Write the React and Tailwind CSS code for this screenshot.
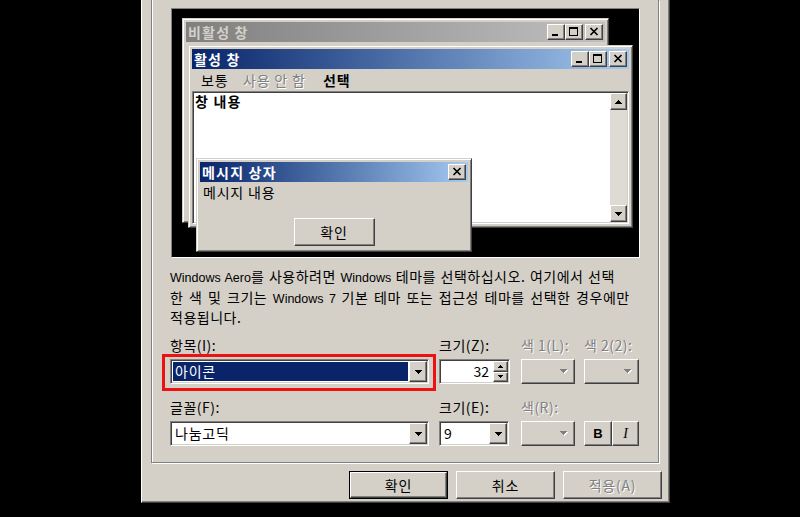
import React from 'react';

const raised = "bg-[#d4d0c8] border border-t-white border-l-white border-r-[#404040] border-b-[#404040] shadow-[inset_-1px_-1px_0_#808080]";
const sunken = "border border-t-[#808080] border-l-[#808080] border-r-white border-b-white shadow-[inset_1px_1px_0_#404040,inset_-1px_-1px_0_#d4d0c8]";
const frame = "bg-[#d4d0c8] border border-t-[#d4d0c8] border-l-[#d4d0c8] border-r-[#404040] border-b-[#404040] shadow-[inset_1px_1px_0_#fff,inset_-1px_-1px_0_#808080] p-[3px]";
const grayText = "text-[#808080] [text-shadow:1px_1px_0_#fff]";
const latin = "font-['Liberation_Sans',sans-serif] text-[12.5px] tracking-normal";

function ArrowDown({ gray = false }) {
  if (gray) {
    return (
      <svg width="8" height="5" viewBox="0 0 8 5" className="block">
        <path transform="translate(1 1)" d="M0 0h7v1h-1v1h-1v1h-1v1h-1v-1h-1v-1h-1v-1h-1z" fill="#fff" />
        <path d="M0 0h7v1h-1v1h-1v1h-1v1h-1v-1h-1v-1h-1v-1h-1z" fill="#808080" />
      </svg>
    );
  }
  return (
    <svg width="7" height="4" viewBox="0 0 7 4" className="block">
      <path d="M0 0h7v1h-1v1h-1v1h-1v1h-1v-1h-1v-1h-1v-1h-1z" fill="#000" />
    </svg>
  );
}

function ArrowUp() {
  return (
    <svg width="7" height="4" viewBox="0 0 7 4" className="block">
      <path d="M3 0h1v1h1v1h1v1h1v1h-7v-1h1v-1h1v-1h1z" fill="#000" />
    </svg>
  );
}

function SmallUp() {
  return (
    <svg width="5" height="3" viewBox="0 0 5 3" className="block">
      <path d="M2 0h1v1h1v1h1v1h-5v-1h1v-1h1z" fill="#000" />
    </svg>
  );
}

function SmallDown() {
  return (
    <svg width="5" height="3" viewBox="0 0 5 3" className="block">
      <path d="M0 0h5v1h-1v1h-1v1h-1v-1h-1v-1h-1z" fill="#000" />
    </svg>
  );
}

function CapBtn({ type }) {
  return (
    <div className={`${raised} w-[18px] h-[16px] flex items-center justify-center shrink-0`}>
      <svg width="14" height="12" viewBox="0 0 14 12" className="block">
        {type === 'min' && <rect x="3" y="8" width="6" height="2" fill="#000" />}
        {type === 'max' && <path d="M2 1h9v9h-9z M3 3h7v6h-7z" fillRule="evenodd" fill="#000" />}
        {type === 'close' && <path d="M3.5 2l7 7M10.5 2l-7 7" stroke="#000" strokeWidth="1.7" />}
      </svg>
    </div>
  );
}

function TitleBar({ active, title, close }) {
  const bg = active
    ? "bg-linear-to-r from-[#0a246a] to-[#a6caf0]"
    : "bg-linear-to-r from-[#808080] to-[#c0c0c0]";
  const tc = active ? "text-white" : "text-[#d4d0c8]";
  return (
    <div className={`${bg} h-[20px] shrink-0 flex items-center pl-[2px] pr-[2px]`}>
      <span className={`${tc} font-bold text-[14px] tracking-[1.2px] leading-[16px] flex-1 whitespace-nowrap`}>{title}</span>
      {!close && <CapBtn type="min" />}
      {!close && <CapBtn type="max" />}
      {!close && <div className="w-[2px]" />}
      <CapBtn type="close" />
    </div>
  );
}

function Preview() {
  return (
    <div className="ml-[19px] mt-[8px] w-[469px] h-[250px] shrink-0 bg-black border border-t-[#808080] border-l-[#808080] border-r-white border-b-white relative">
      {/* inactive window */}
      <div className={`${frame} absolute left-[10px] top-[9px] w-[427px] h-[205px] flex flex-col`}>
        <TitleBar active={false} title="비활성 창" />
      </div>
      {/* active window */}
      <div className={`${frame} absolute left-[16px] top-[36px] w-[445px] h-[183px] flex flex-col`}>
        <TitleBar active title="활성 창" />
        <div className="h-[22px] shrink-0 flex items-center pl-[9px] leading-[16px] whitespace-nowrap tracking-[0.8px]">
          <span className="w-[42px]">보통</span>
          <span className={`w-[80px] ${grayText}`}>사용 안 함</span>
          <span className="font-bold">선택</span>
        </div>
        <div className={`${sunken} bg-white flex-1 flex p-[1px]`}>
          <div className="flex-1 font-bold leading-[16px] pl-[1px] tracking-[1.2px]">창 내용</div>
          <div className="w-[17px] flex flex-col bg-[#dedbd4]">
            <div className={`${raised} h-[17px] flex items-center justify-center`}><ArrowUp /></div>
            <div className="flex-1" />
            <div className={`${raised} h-[17px] flex items-center justify-center`}><ArrowDown /></div>
          </div>
        </div>
      </div>
      {/* message box */}
      <div className={`${frame} absolute left-[24px] top-[149px] w-[276px] h-[94px] flex flex-col`}>
        <TitleBar active close title="메시지 상자" />
        <div className="pl-[3px] mt-[2px] leading-[16px] tracking-[0.8px]">메시지 내용</div>
        <div className="flex justify-center mt-[18px]">
          <div className={`${raised} w-[81px] h-[28px] flex items-center justify-center tracking-[0.8px]`}>확인</div>
        </div>
      </div>
    </div>
  );
}

function ComboBtn() {
  return (
    <div className={`${raised} w-[18px] h-full flex items-center justify-center shrink-0`}>
      <ArrowDown />
    </div>
  );
}

function ColorBtn({ className = '' }) {
  return (
    <div className={`${raised} h-[25px] flex items-center justify-end pr-[6px] ${className}`}>
      <ArrowDown gray />
    </div>
  );
}

export default function App() {
  return (
    <div className="w-[800px] h-[517px] bg-black overflow-hidden font-['Noto_Sans_CJK_KR','Liberation_Sans',sans-serif] text-[14px] text-black">
      <div className="ml-[141px] w-[529px] h-[503px] bg-[#d4d0c8] border-l border-r border-b border-l-white border-r-[#404040] border-b-[#404040] shadow-[inset_-1px_-1px_0_#808080] flex flex-col">
        {/* group box */}
        <div className="ml-[9px] w-[508px] h-[463px] shrink-0 border-l border-r border-b border-[#808080] shadow-[inset_1px_0_0_#fff,1px_1px_0_#fff] flex flex-col">
          <Preview />

          <div className="ml-[18px] mt-[9px] h-[56px] shrink-0 leading-[18.5px] whitespace-nowrap tracking-[0.5px] [word-spacing:1px]">
            <div><span className={latin}>Windows Aero</span>를 사용하려면 <span className={latin}>Windows</span> 테마를 선택하십시오. 여기에서 선택</div>
            <div className="[word-spacing:2px]">한 색 및 크기는 <span className={latin}>Windows 7</span> 기본 테마 또는 접근성 테마를 선택한 경우에만</div>
            <div>적용됩니다.</div>
          </div>

          {/* row 1 labels */}
          <div className="flex mt-[14px] h-[16px] leading-[16px] whitespace-nowrap shrink-0 tracking-[0.5px]">
            <div className="ml-[18px] w-[259px]">항목(I):</div>
            <div className="ml-[10px] w-[71px]">크기(Z):</div>
            <div className={`ml-[11px] w-[54px] ${grayText}`}>색 1(L):</div>
            <div className={`ml-[9px] w-[55px] ${grayText}`}>색 2(2):</div>
          </div>
          {/* row 1 controls */}
          <div className="flex mt-[6px] h-[25px] shrink-0">
            <div className="ml-[18px] w-[259px] relative">
              <div className={`${sunken} bg-white h-[25px] flex p-[1px]`}>
                <div className="flex-1 m-[1px] bg-[#0a246a] text-white leading-[19px] pl-[2px] whitespace-nowrap tracking-[0.8px]">아이콘</div>
                <ComboBtn />
              </div>
              <div className="absolute left-[-8px] top-[-5px] w-[274px] h-[37px] border-[3px] border-[#ee1111] pointer-events-none" />
            </div>
            <div className={`${sunken} ml-[10px] w-[71px] bg-white h-[25px] flex p-[1px]`}>
              <div className="flex-1 text-right pr-[4px] leading-[21px]">32</div>
              <div className="w-[15px] flex flex-col">
                <div className={`${raised} flex-1 flex items-center justify-center`}><SmallUp /></div>
                <div className={`${raised} flex-1 flex items-center justify-center`}><SmallDown /></div>
              </div>
            </div>
            <ColorBtn className="ml-[11px] w-[54px]" />
            <ColorBtn className="ml-[9px] w-[55px]" />
          </div>

          {/* row 2 labels */}
          <div className="flex mt-[15px] h-[16px] leading-[16px] whitespace-nowrap shrink-0 tracking-[0.5px]">
            <div className="ml-[18px] w-[259px]">글꼴(F):</div>
            <div className="ml-[10px] w-[71px]">크기(E):</div>
            <div className={`ml-[11px] w-[54px] ${grayText}`}>색(R):</div>
          </div>
          {/* row 2 controls */}
          <div className="flex mt-[6px] h-[25px] shrink-0">
            <div className={`${sunken} ml-[18px] w-[259px] bg-white h-[25px] flex p-[1px]`}>
              <div className="flex-1 leading-[21px] pl-[3px] whitespace-nowrap tracking-[0.8px]">나눔고딕</div>
              <ComboBtn />
            </div>
            <div className={`${sunken} ml-[10px] w-[70px] bg-white h-[25px] flex p-[1px]`}>
              <div className="flex-1 leading-[21px] pl-[3px]">9</div>
              <ComboBtn />
            </div>
            <ColorBtn className="ml-[12px] w-[54px]" />
            <div className={`${raised} ml-[9px] w-[28px] h-[25px] flex items-center justify-center font-bold font-['Liberation_Sans',sans-serif] text-[13px]`}>B</div>
            <div className={`${raised} w-[27px] h-[25px] flex items-center justify-center italic font-['Liberation_Serif',serif] text-[14px]`}>I</div>
          </div>
        </div>

        {/* dialog buttons */}
        <div className="mt-[8px] flex justify-end gap-[8px] pr-[7px] tracking-[0.8px]">
          <div className="border border-black w-[99px] h-[28px] flex">
            <div className={`${raised} flex-1 flex items-center justify-center`}>확인</div>
          </div>
          <div className={`${raised} w-[99px] h-[28px] flex items-center justify-center`}>취소</div>
          <div className={`${raised} w-[99px] h-[28px] flex items-center justify-center ${grayText}`}>적용(A)</div>
        </div>
      </div>
    </div>
  );
}
